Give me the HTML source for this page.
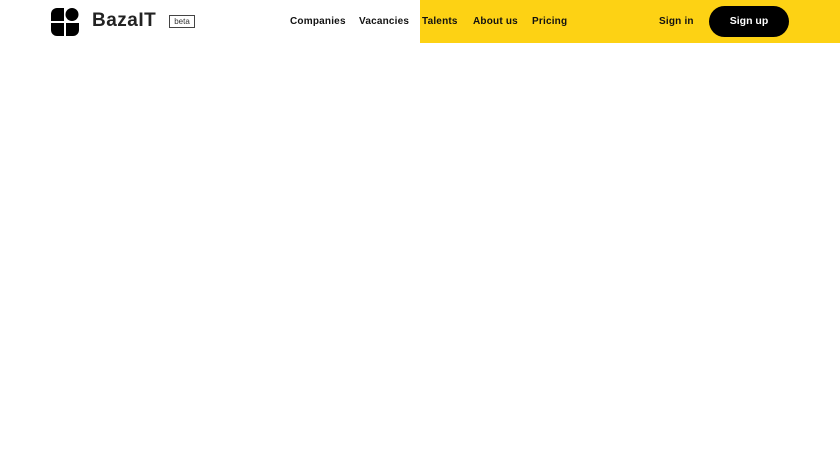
<!DOCTYPE html><html><head><style>
body{margin:0;width:840px;height:472px;background:#fff;font-family:"Liberation Sans",sans-serif;position:relative;overflow:hidden}
.y{position:absolute;left:420px;top:0;width:420px;height:43px;background:#fdd214}
.n{position:absolute;top:16px;font-size:10px;font-weight:bold;color:#111;white-space:nowrap;letter-spacing:0.2px}
.b{position:absolute;left:709px;top:6px;width:80px;height:31px;border-radius:16px;background:#000;color:#fff;font-weight:bold;font-size:10.5px;text-align:center;line-height:31px}
</style></head><body>
<div class="y"></div>
<svg style="position:absolute;left:51px;top:8px" width="28" height="28" viewBox="0 0 28 28">
<path d="M0 13V6a6 6 0 0 1 6-6h7v13z" fill="#000"/>
<circle cx="21" cy="6.5" r="6.5" fill="#000"/>
<path d="M0 15h13v13H6a6 6 0 0 1-6-6z" fill="#000"/>
<path d="M15 15h13v7a6 6 0 0 1-6 6h-7z" fill="#000"/>
</svg>
<div style="position:absolute;left:92px;top:10px;font-size:19px;font-weight:bold;color:#222;letter-spacing:0.5px">BazaIT</div>
<div style="position:absolute;left:169px;top:15px;width:24px;height:11px;border:1px solid #444;font-size:8px;line-height:11px;text-align:center;color:#333">beta</div>
<div class="n" style="left:290px">Companies</div>
<div class="n" style="left:359px">Vacancies</div>
<div class="n" style="left:422px">Talents</div>
<div class="n" style="left:473px">About us</div>
<div class="n" style="left:532px">Pricing</div>
<div class="n" style="left:659px">Sign in</div>
<div class="b">Sign up</div>
</body></html>
